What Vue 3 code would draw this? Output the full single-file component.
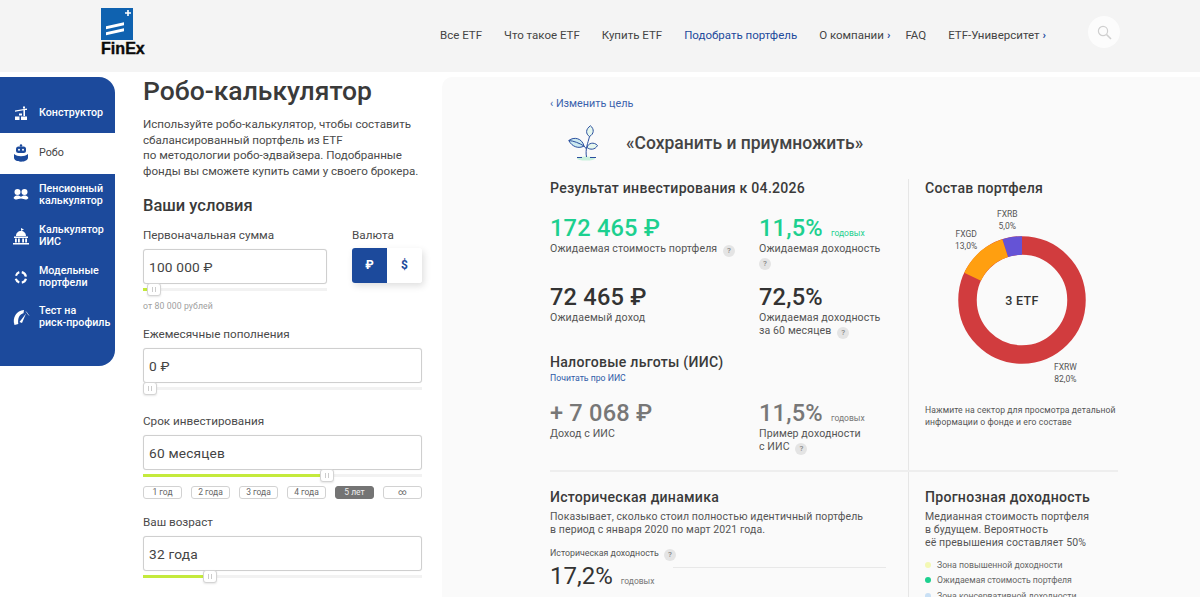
<template>
  <div class="page">
    <header class="topbar">
      <a class="logo">
        <svg class="logo-mark" width="32" height="32" viewBox="0 0 32 32">
          <rect width="32" height="32" fill="#0f62b0" />
          <path d="M5 18.300 23 14.300v3L5 21.300zM5 24.300 23 20.300v3L5 27.300z" fill="#fff" />
          <path d="M27 2v6M24 5h6" stroke="#fff" stroke-width="1.600" />
        </svg>
        <span class="logo-text">FinEx</span>
      </a>
      <nav class="nav">
        <a v-for="item in navItems" :key="item.label" :class="{ active: item.active }">
          {{ item.label }}<span v-if="item.more" class="nav-more">›</span>
        </a>
      </nav>
      <div class="search">
        <svg width="15" height="15" viewBox="0 0 15 15" fill="none" stroke="#cfcfcf" stroke-width="1.200">
          <circle cx="6" cy="6" r="4.600" />
          <path d="m9.500 9.500 4.500 4.500" stroke-width="1.600" />
        </svg>
      </div>
    </header>

    <main class="content">
      <aside class="sidebar">
        <a
          v-for="item in sideItems"
          :key="item.key"
          class="side-item"
          :class="[item.key, { current: item.key === 'robo' }]"
        >
          <span class="side-icon">
            <svg width="18" height="18" viewBox="0 0 18 18" fill="currentColor">
              <template v-if="item.key === 'builder'">
                <path d="M3 6.500 15 4.500v1.600H13V12h-1.600V6.300L3 7.800zM11 2.500h2v2h-2z" />
                <path d="M3 12.500h4.500V16H3zM9 12.500h6V16H9zM7 9.500h3V11.500H7z" />
              </template>
              <template v-else-if="item.key === 'robo'">
                <circle cx="9" cy="1.500" r="1.200" />
                <rect x="4" y="2.500" width="10" height="6.500" rx="2.500" />
                <path d="M2 10c2 1.500 4 2.200 7 2.200s5-.7 7-2.200v3.500c0 2.500-3 4.200-7 4.200s-7-1.700-7-4.200z" />
                <circle cx="7" cy="5.700" r="1" fill="#fff" />
                <circle cx="11" cy="5.700" r="1" fill="#fff" />
              </template>
              <template v-else-if="item.key === 'pension'">
                <circle cx="5.500" cy="6" r="3" />
                <circle cx="12.500" cy="6" r="3" />
                <path d="M1.500 12c1-2 2.500-2.500 4-2.500 1.500 0 2.500.5 3.500 1.500 1-1 2-1.500 3.500-1.500s3 .5 4 2.500c-1.500 1.800-3.300 1.800-5 1l-2.500-.5-2.500.5c-1.700.8-3.500.8-5-1z" />
              </template>
              <template v-else-if="item.key === 'iis'">
                <path d="M9 1v3l3-1.500zM4 9c0-3 2.200-5 5-5s5 2 5 5zM2 9.500h14V11H2zM3 11.500h1.800v4H3zM6 11.500h1.800v4H6zM10.200 11.500H12v4h-1.800zM13.200 11.500H15v4h-1.800zM1 16h16v1.500H1z" />
              </template>
              <template v-else-if="item.key === 'model'">
                <path d="M3 7.500A6.500 6.500 0 0 1 7 3l.6 2.200A4.500 4.500 0 0 0 5 8zM10 3a6.500 6.500 0 0 1 5 5.500l-2.200.2A4.500 4.500 0 0 0 9.500 5.200zM15 11a6.500 6.500 0 0 1-5 4.700l-.4-2.200a4.500 4.500 0 0 0 3.300-3zM7 15.500A6.500 6.500 0 0 1 2.700 11l2.200-.5A4.500 4.500 0 0 0 7.600 13.300z" />
              </template>
              <template v-else>
                <path d="M2.500 17C0 10 4.500 2.500 12 2l-.5 3.200C7.500 6 5.500 10 6.300 16z" />
                <path d="M7.500 14 14 5.500l-4 9.500z" />
                <path d="M14 3.500l3 4" stroke="currentColor" stroke-width=".6" fill="none" />
              </template>
            </svg>
          </span>
          <span class="side-label">
            <span v-for="line in item.lines" :key="line">{{ line }}</span>
          </span>
        </a>
      </aside>

      <section class="calc">
        <h1>Робо-калькулятор</h1>
        <p class="intro">
          Используйте робо-калькулятор, чтобы составить<br />
          сбалансированный портфель из ETF<br />
          по методологии робо-эдвайзера. Подобранные<br />
          фонды вы сможете купить сами у своего брокера.
        </p>
        <h2>Ваши условия</h2>

        <div class="first-row">
          <div class="field first-amount">
            <label>Первоначальная сумма</label>
            <div class="input">100 000 ₽</div>
            <div class="slider"><i class="fill" style="width: 6px"></i><b class="thumb" style="left: 4px"></b></div>
            <div class="hint">от 80 000 рублей</div>
          </div>
          <div class="currency">
            <label>Валюта</label>
            <div class="currency-switch">
              <span class="on">₽</span>
              <span>$</span>
            </div>
          </div>
        </div>

        <div class="field monthly">
          <label>Ежемесячные пополнения</label>
          <div class="input">0 ₽</div>
          <div class="slider"><b class="thumb" style="left: 0"></b></div>
        </div>

        <div class="field term">
          <label>Срок инвестирования</label>
          <div class="input">60 месяцев</div>
          <div class="slider"><i class="fill" style="width: 178px"></i><b class="thumb" style="left: 177px"></b></div>
          <div class="presets">
            <span v-for="p in presets" :key="p" :class="{ on: p === '5 лет' }">{{ p }}</span>
          </div>
        </div>

        <div class="field age">
          <label>Ваш возраст</label>
          <div class="input">32 года</div>
          <div class="slider"><i class="fill" style="width: 62px"></i><b class="thumb" style="left: 60px"></b></div>
        </div>
      </section>

      <section class="result">
        <a class="back">‹ Изменить цель</a>
        <div class="goal">
          <svg width="30" height="36" viewBox="0 0 30 36" fill="none" stroke="#2a4f9e" stroke-width="1">
            <ellipse cx="18" cy="33.500" rx="9" ry="2" fill="#c9f0dc" stroke="none" />
            <path d="M21.500 11.500C17.500 9 17.500 4 22.500.8 26.500 4 26 9 21.500 11.500z" fill="#e6f7ee" />
            <path d="M16 21C11 24 4 22 .8 15.500 6 11.500 14 13 16 21z" fill="#cdeaf0" />
            <path d="M.8 15.500C6 16 11 18 16 21" />
            <path d="M19 22.500C20 18 26 16.500 29.500 20.500 27 25 22 25 19 22.500z" fill="#e6f7ee" />
            <path d="M21.500 11.500C20 18 17 24 18.500 32M16 21l2.500 3" />
            <path d="M9 32.500h5M22 32.500h6" />
          </svg>
          <span>«Сохранить и приумножить»</span>
        </div>

        <div class="panels top-panels">
          <div class="main-col">
            <h3>Результат инвестирования к 04.2026</h3>
            <div class="metrics">
              <div class="metric green">
                <div class="num">172 465 ₽</div>
                <div class="cap">Ожидаемая стоимость портфеля <em>?</em></div>
              </div>
              <div class="metric green">
                <div class="num">11,5% <small>годовых</small></div>
                <div class="cap">Ожидаемая доходность<br /><em class="no-gap">?</em></div>
              </div>
              <div class="metric">
                <div class="num">72 465 ₽</div>
                <div class="cap">Ожидаемый доход</div>
              </div>
              <div class="metric">
                <div class="num">72,5%</div>
                <div class="cap">Ожидаемая доходность<br />за 60 месяцев <em>?</em></div>
              </div>
            </div>
            <h3 class="tax-title">Налоговые льготы (ИИС)</h3>
            <a class="tax-link">Почитать про ИИС</a>
            <div class="metrics tax">
              <div class="metric grey">
                <div class="num">+ 7 068 ₽</div>
                <div class="cap">Доход с ИИС</div>
              </div>
              <div class="metric grey">
                <div class="num">11,5% <small>годовых</small></div>
                <div class="cap">Пример доходности<br />с ИИС <em>?</em></div>
              </div>
            </div>
          </div>
          <div class="side-col">
            <h3>Состав портфеля</h3>
            <div class="donut">
              <svg width="128" height="128" viewBox="0 0 128 128" fill="none" stroke-width="18.500">
                <circle cx="64" cy="64" r="54.500" stroke="#d13c3e" />
                <path d="M64 9.500A54.500 54.500 0 0 0 47.160 12.170" stroke="#6553d6" />
                <path d="M47.160 12.170A54.500 54.500 0 0 0 14.600 40.800" stroke="#ff9f10" />
              </svg>
              <span class="donut-center">3 ETF</span>
              <span class="tag fxrb">FXRB<br />5,0%</span>
              <span class="tag fxgd">FXGD<br />13,0%</span>
              <span class="tag fxrw">FXRW<br />82,0%</span>
            </div>
            <p class="donut-note">Нажмите на сектор для просмотра детальной информации о фонде и его составе</p>
          </div>
        </div>

        <div class="panels bottom-panels">
          <div class="main-col">
            <h3>Историческая динамика</h3>
            <p class="desc">Показывает, сколько стоил полностью идентичный портфель<br />в период с января 2020 по март 2021 года.</p>
            <div class="hist-label">Историческая доходность <em>?</em></div>
            <div class="hist-row">
              <div class="hist-num">17,2% <small>годовых</small></div>
              <div class="hist-line"></div>
            </div>
          </div>
          <div class="side-col">
            <h3>Прогнозная доходность</h3>
            <p class="desc">Медианная стоимость портфеля<br />в будущем. Вероятность<br />её превышения составляет 50%</p>
            <ul class="legend">
              <li v-for="row in legend" :key="row.label">
                <i :style="{ background: row.color }"></i>{{ row.label }}
              </li>
            </ul>
          </div>
        </div>
      </section>
    </main>
  </div>
</template>

<script setup>
const navItems = [
  { label: 'Все ETF' },
  { label: 'Что такое ETF' },
  { label: 'Купить ETF' },
  { label: 'Подобрать портфель', active: true },
  { label: 'О компании', more: true },
  { label: 'FAQ' },
  { label: 'ETF-Университет', more: true },
]

const sideItems = [
  { key: 'builder', lines: ['Конструктор'] },
  { key: 'robo', lines: ['Робо'] },
  { key: 'pension', lines: ['Пенсионный', 'калькулятор'] },
  { key: 'iis', lines: ['Калькулятор', 'ИИС'] },
  { key: 'model', lines: ['Модельные', 'портфели'] },
  { key: 'risk', lines: ['Тест на', 'риск-профиль'] },
]

const presets = ['1 год', '2 года', '3 года', '4 года', '5 лет', '∞']

const legend = [
  { label: 'Зона повышенной доходности', color: '#f3f8b4' },
  { label: 'Ожидаемая стоимость портфеля', color: '#1dd08f' },
  { label: 'Зона консервативной доходности', color: '#c9e0f5' },
]
</script>

<style>
body {
  background: #fff;
}
</style>

<style scoped>
.page {
  height: 597px;
  overflow: hidden;
  background: #fff;
  color: #3a3a3a;
  font-family: Roboto, "Noto Sans", sans-serif;
}

.topbar {
  display: flex;
  align-items: flex-start;
  height: 72px;
  background: #f4f4f4;
  padding-left: 101px;
  box-sizing: border-box;
}
.logo {
  display: flex;
  flex-direction: column;
  flex: none;
  width: 60px;
  padding-top: 8px;
}
.logo-text {
  font-family: "Liberation Sans", sans-serif;
  font-weight: 700;
  font-size: 16.100px;
  line-height: 17px;
  color: #0a0a0a;
  -webkit-text-stroke: 0.4px #0a0a0a;
}
.nav {
  display: flex;
  gap: 22px;
  margin-left: 279px;
  padding-top: 27px;
  font-size: 11.500px;
  line-height: 16px;
  color: #444;
  white-space: nowrap;
}
.nav .active {
  color: #1c4a9c;
}
.nav-more {
  margin-left: 3px;
  margin-right: -7px;
  color: #1c4a9c;
  font-weight: 700;
}
.search {
  flex: none;
  display: flex;
  align-items: center;
  justify-content: center;
  width: 32px;
  height: 32px;
  margin-left: auto;
  margin-right: 80px;
  margin-top: 16px;
  border-radius: 50%;
  background: #fcfcfc;
}

.content {
  display: flex;
  align-items: flex-start;
  padding-top: 5px;
}

.sidebar {
  flex: none;
  display: flex;
  flex-direction: column;
  width: 115px;
  height: 289px;
  border-radius: 0 16px 16px 0;
  background: #1c4a9c;
  overflow: hidden;
  color: #fff;
}
.side-item {
  display: flex;
  align-items: center;
  font-size: 10.700px;
  line-height: 12px;
  font-weight: 500;
  height: 41px;
}
.side-item.builder {
  height: 56px;
  padding-top: 15px;
  box-sizing: border-box;
}
.side-item.current {
  background: #fff;
  color: #444;
  font-weight: 400;
  padding-bottom: 1px;
  box-sizing: border-box;
}
.side-item.pension {
  height: 27px;
  margin-top: 7px;
}
.side-item.iis,
.side-item.model,
.side-item.risk {
  height: 27px;
  margin-top: 14px;
}
.side-item.risk {
  margin-top: 13px;
}
.side-icon {
  flex: none;
  display: flex;
  justify-content: center;
  width: 39px;
  padding-left: 3px;
  box-sizing: border-box;
}
.current .side-icon {
  color: #1c4a9c;
}
.side-label {
  display: flex;
  flex-direction: column;
  white-space: nowrap;
}

.calc {
  flex: none;
  width: 279px;
  margin-left: 28px;
  margin-top: -1px;
}
h1 {
  margin: 0;
  font-size: 26.500px;
  line-height: 30px;
  font-weight: 500;
  color: #3a3a3a;
  white-space: nowrap;
}
.intro {
  margin: 11px 0 0;
  font-size: 11.600px;
  line-height: 15.600px;
  color: #4a4a4a;
  white-space: nowrap;
}
h2 {
  margin: 17px 0 0;
  font-size: 16.500px;
  line-height: 20px;
  font-weight: 500;
  color: #3a3a3a;
}
label {
  display: block;
  font-size: 11.700px;
  line-height: 16px;
  color: #4a4a4a;
}
.first-row {
  display: flex;
  justify-content: space-between;
  margin-top: 11px;
}
.first-amount {
  width: 184px;
}
.input {
  box-sizing: border-box;
  height: 35px;
  margin-top: 6px;
  padding-left: 5px;
  border: 1px solid #cfcfcf;
  border-radius: 3px;
  background: #fff;
  box-shadow: 0 0 1px #ddd;
  font-size: 13.700px;
  line-height: 34px;
  letter-spacing: 0.2px;
  color: #444;
}
.slider {
  position: relative;
  height: 3px;
  margin-top: 4px;
  background: #f2f2f2;
}
.fill {
  display: block;
  height: 100%;
  background: #c4ea3c;
}
.thumb {
  position: absolute;
  top: -5px;
  width: 14px;
  height: 13px;
  box-sizing: border-box;
  border: 1px solid #d4d4d4;
  border-radius: 3px;
  background: #fff;
  box-shadow: 0 1px 2px rgba(0, 0, 0, .1);
}
.thumb::after {
  content: '';
  position: absolute;
  left: 4px;
  top: 3px;
  width: 2px;
  height: 5px;
  border-left: 1px solid #ccc;
  border-right: 1px solid #ccc;
}
.hint {
  margin-top: 9px;
  font-size: 8.700px;
  line-height: 12px;
  letter-spacing: 0.1px;
  color: #a0a0a0;
}
.currency {
  width: 70px;
}
.currency-switch {
  display: flex;
  height: 35px;
  margin-top: 5px;
  border-radius: 3px;
  overflow: hidden;
  box-shadow: 2px 3px 7px rgba(0, 0, 0, .13);
}
.currency-switch span {
  flex: 1;
  text-align: center;
  font-size: 12px;
  font-weight: 700;
  line-height: 35px;
  color: #1c4a9c;
  background: #fff;
}
.currency-switch .on {
  background: #1c4a9c;
  color: #fff;
}
.monthly {
  margin-top: 14px;
}
.term {
  margin-top: 23px;
}
.presets {
  display: flex;
  justify-content: space-between;
  margin-top: 9px;
}
.presets span {
  width: 39px;
  height: 13px;
  box-sizing: border-box;
  border: 1px solid #d2d2d2;
  border-radius: 3px;
  font-size: 8.500px;
  line-height: 11px;
  text-align: center;
  color: #666;
}
.presets .on {
  background: #747474;
  border-color: #747474;
  color: #eee;
}
.age {
  margin-top: 15px;
}

.result {
  flex: 1;
  min-width: 0;
  margin-left: 20px;
  padding: 21px 82px 0 108px;
  background: #fafafa;
  border-radius: 10px 0 0 0;
  height: 520px;
  box-sizing: border-box;
}
.back {
  display: block;
  font-size: 10.800px;
  line-height: 12px;
  color: #3a62ad;
}
.goal {
  display: flex;
  align-items: center;
  height: 36px;
  margin-top: 15px;
  padding-left: 18px;
  font-size: 17.500px;
  font-weight: 500;
  color: #444;
}
.goal svg {
  margin-right: 28px;
}
.panels {
  display: flex;
}
.top-panels {
  margin-top: 18px;
  height: 293px;
  border-bottom: 2px solid #eee;
  box-sizing: border-box;
}
.main-col {
  flex: none;
  width: 359px;
  border-right: 1px solid #e6e6e6;
  box-sizing: border-box;
}
.side-col {
  flex: 1;
  padding-left: 16px;
  min-width: 0;
}
h3 {
  margin: 0;
  font-size: 14.100px;
  line-height: 18px;
  font-weight: 500;
  letter-spacing: 0.25px;
  color: #3a3a3a;
}
.metrics {
  display: grid;
  grid-template-columns: 209px 1fr;
  margin-top: 17px;
}
.metric {
  height: 69px;
}
.num {
  font-size: 23.600px;
  line-height: 28px;
  font-weight: 500;
  letter-spacing: 0.2px;
  color: #333;
  white-space: nowrap;
}
.num small {
  margin-left: 2px;
  font-size: 8.500px;
  line-height: 1;
  font-weight: 400;
  letter-spacing: 0;
  color: #777;
}
.green .num,
.green .num small {
  color: #1dd08f;
}
.grey .num {
  color: #777;
}
.cap {
  font-size: 10.600px;
  line-height: 13px;
  letter-spacing: 0.1px;
  color: #555;
}
em {
  display: inline-block;
  width: 12px;
  height: 12px;
  margin-left: 3px;
  border-radius: 50%;
  background: #e4e4e4;
  font-style: normal;
  font-size: 8px;
  font-weight: 500;
  line-height: 12px;
  text-align: center;
  color: #888;
  vertical-align: -1px;
}
em.no-gap {
  margin-left: 0;
}
.tax-title {
  margin-top: 1px;
}
.tax-link {
  display: block;
  margin-top: 1px;
  font-size: 8.700px;
  line-height: 12px;
  color: #2f5aa8;
}
.metrics.tax {
  margin-top: 15px;
}
.donut {
  position: relative;
  width: 128px;
  height: 128px;
  margin: 39px 0 0 33px;
}
.donut svg {
  display: block;
}
.donut-center {
  position: absolute;
  inset: 0;
  display: flex;
  align-items: center;
  justify-content: center;
  font-size: 12.500px;
  font-weight: 500;
  letter-spacing: 0.3px;
  color: #333;
}
.tag {
  position: absolute;
  font-size: 8.500px;
  line-height: 11.500px;
  text-align: center;
  color: #555;
}
.fxrb {
  left: 39px;
  top: -27px;
}
.fxgd {
  left: -3px;
  top: -7px;
}
.fxrw {
  left: 96px;
  top: 126px;
}
.donut-note {
  margin: 41px 0 0;
  font-size: 8.600px;
  line-height: 11.500px;
  letter-spacing: 0.1px;
  color: #555;
}
.bottom-panels {
  height: 140px;
}
.bottom-panels .main-col {
  padding-top: 16px;
}
.bottom-panels .side-col {
  padding-top: 16px;
}
.desc {
  margin: 4px 0 0;
  font-size: 10.500px;
  line-height: 13px;
  letter-spacing: 0.1px;
  color: #555;
}
.hist-label {
  margin-top: 11px;
  font-size: 8.800px;
  line-height: 12px;
  color: #555;
}
.hist-row {
  display: flex;
}
.hist-num {
  width: 123px;
  font-size: 24px;
  line-height: 30px;
  color: #333;
  white-space: nowrap;
}
.hist-num small {
  margin-left: 2px;
  font-size: 8.500px;
  line-height: 1;
  color: #777;
}
.hist-line {
  width: 213px;
  height: 1px;
  margin-top: 6px;
  background: #e8e8e8;
}
.legend {
  margin: 9px 0 0;
  padding: 0;
  list-style: none;
  font-size: 8.700px;
  line-height: 15.300px;
  color: #666;
}
.legend i {
  display: inline-block;
  width: 6px;
  height: 6px;
  margin-right: 6px;
  border-radius: 50%;
}
</style>
